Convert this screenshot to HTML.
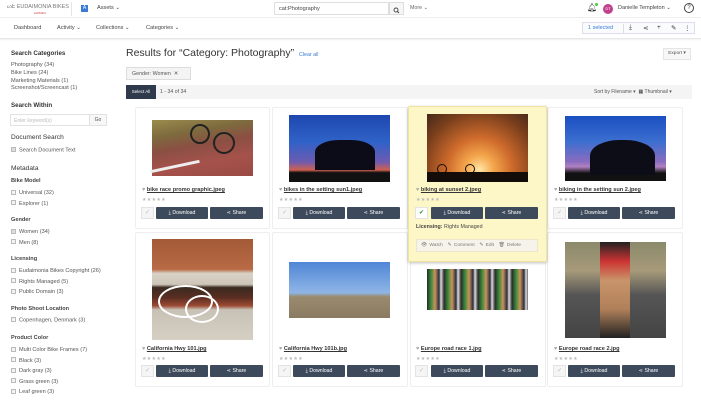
<!DOCTYPE html>
<html><head><meta charset="utf-8"><style>
*{margin:0;padding:0;box-sizing:border-box}
body{width:701px;height:402px;overflow:hidden;background:#fff;font-family:"Liberation Sans",sans-serif;color:#333;position:relative}
.a{position:absolute;white-space:nowrap}
.s{font-size:5.6px;color:#555}
.h{font-size:6.8px;color:#333}
.hb{font-size:5.6px;font-weight:bold;color:#444}
.cb{display:inline-block;width:5px;height:5px;border:0.5px solid #bbb;background:#f3f3f3;margin-right:3px;vertical-align:-0.5px}
.card{position:absolute;background:#fff;border:1px solid #eee;border-radius:2px}
.img{position:absolute}
.t{position:absolute;font-size:5.6px;font-weight:bold;color:#333;white-space:nowrap}
.t u{text-decoration:underline}
.t i{font-style:normal;color:#aaa}
.st{position:absolute;font-size:5px;color:#bbb;letter-spacing:0.3px}
.chk{position:absolute;width:13px;height:12px;border:1px solid #e3e3e3;background:#f5f5f5;color:#bbb;font-size:6px;text-align:center;line-height:10px}
.btn{position:absolute;height:12px;background:#3d4a5c;color:#fff;font-size:5.2px;text-align:center;line-height:12px;border-radius:1px}
.ti{position:absolute;top:24px;font-size:6.5px;color:#333}
</style></head><body>
<div class="a" style="left:0;top:0;width:701px;height:18px;border-bottom:1px solid #eee"></div>
<div class="a" style="left:7px;top:4px;font-size:5.5px;color:#777">ᔕᖶ EUDAIMONIA BIKES</div>
<div class="a" style="left:34px;top:11px;font-size:3px;color:#c44">●WIDEN</div>
<div class="a" style="left:71px;top:2px;width:1px;height:14px;background:#e5e5e5"></div>
<div class="a" style="left:81px;top:5px;width:7px;height:7px;background:#3b7bd4;color:#fff;font-size:5px;text-align:center;line-height:7px">A</div>
<div class="a" style="left:97px;top:5px;font-size:5.6px;color:#444">Assets ⌄</div>
<div class="a" style="left:274px;top:2px;width:115px;height:13px;border:1px solid #ddd;border-radius:1px;font-size:5.6px;color:#444;padding:3px 4px">cat:Photography</div>
<div class="a" style="left:389px;top:2px;width:15px;height:13px;border:1px solid #ddd;background:#f7f7f7"><svg width="13" height="11" viewBox="0 0 13 11"><circle cx="6" cy="5" r="2" fill="none" stroke="#444" stroke-width="0.9"/><path d="M7.4 6.4L9 8" stroke="#444" stroke-width="1"/></svg></div>
<div class="a" style="left:410px;top:5px;font-size:5.3px;color:#666">More ⌄</div>
<div class="a" style="left:587px;top:3px;font-size:8px;color:#333">🔔︎</div>
<div class="a" style="left:595px;top:3px;width:3px;height:3px;border-radius:50%;background:#4c4"></div>
<div class="a" style="left:603px;top:4px;width:10px;height:10px;border-radius:50%;background:#c0408e;color:#fff;font-size:4px;text-align:center;line-height:10px">DT</div>
<div class="a" style="left:618px;top:5px;font-size:5.5px;color:#444">Danielle Templeton ⌄</div>
<div class="a" style="left:684px;top:3px;width:10px;height:10px;border:1px solid #444;border-radius:50%;font-size:6px;text-align:center;line-height:8px">?</div>
<div class="a" style="left:0;top:18px;width:701px;height:21px;border-bottom:1px solid #e8e8e8;box-shadow:0 1px 1px #f0f0f0"></div>
<div class="a" style="left:14px;top:25px;font-size:5.6px;color:#444">Dashboard</div>
<div class="a" style="left:57px;top:25px;font-size:5.6px;color:#444">Activity ⌄</div>
<div class="a" style="left:96px;top:25px;font-size:5.6px;color:#444">Collections ⌄</div>
<div class="a" style="left:146px;top:25px;font-size:5.6px;color:#444">Categories ⌄</div>
<div class="a" style="left:582px;top:22px;width:113px;height:12px;border:1px solid #dde;background:#fafbfd"></div>
<div class="a" style="left:588px;top:25px;font-size:5.5px;color:#3b7bd4">1 selected</div>
<div class="a" style="left:623px;top:24px;width:1px;height:9px;background:#ddd"></div>
<div class="ti" style="left:629px">⤓</div><div class="ti" style="left:643px">⋖</div><div class="ti" style="left:657px">+</div><div class="ti" style="left:671px">✎</div><div class="ti" style="left:684px">⋮</div>
<div class="a h" style="left:11px;top:50px;font-weight:bold;font-size:6.2px">Search Categories</div>
<div class="a s" style="left:11px;top:62px;line-height:7.8px">Photography (34)<br>Bike Lines (24)<br>Marketing Materials (1)<br>Screenshot/Screencast (1)</div>
<div class="a h" style="left:11px;top:102px;font-weight:bold;font-size:6.2px">Search Within</div>
<div class="a" style="left:10px;top:114px;width:97px;height:12px;border:1px solid #e2e2e2;font-size:5px;color:#bbb;padding:3px 3px">Enter keyword(s)</div>
<div class="a" style="left:89px;top:115px;width:17px;height:10px;border-left:1px solid #e2e2e2;background:#f7f7f7;font-size:5px;color:#555;text-align:center;line-height:10px">Go</div>
<div class="a h" style="left:11px;top:134px;font-size:6.6px">Document Search</div>
<div class="a s" style="left:11px;top:147px"><span class="cb" style="background:#ddd"></span>Search Document Text</div>
<div class="a h" style="left:11px;top:165px;font-size:6.6px">Metadata</div>
<div class="a hb" style="left:11px;top:178px">Bike Model</div>
<div class="a s" style="left:11px;top:188px;line-height:10.5px"><span class="cb"></span>Universal (32)<br><span class="cb"></span>Explorer (1)</div>
<div class="a hb" style="left:11px;top:217px">Gender</div>
<div class="a s" style="left:11px;top:227px;line-height:10.5px"><span class="cb" style="background:#ddd"></span>Women (34)<br><span class="cb"></span>Men (8)</div>
<div class="a hb" style="left:11px;top:256px">Licensing</div>
<div class="a s" style="left:11px;top:266px;line-height:10.5px"><span class="cb"></span>Eudaimonia Bikes Copyright (26)<br><span class="cb"></span>Rights Managed (5)<br><span class="cb"></span>Public Domain (3)</div>
<div class="a hb" style="left:11px;top:306px">Photo Shoot Location</div>
<div class="a s" style="left:11px;top:317px"><span class="cb"></span>Copenhagen, Denmark (3)</div>
<div class="a hb" style="left:11px;top:335px">Product Color</div>
<div class="a s" style="left:11px;top:345px;line-height:10.5px"><span class="cb"></span>Multi Color Bike Frames (7)<br><span class="cb"></span>Black (3)<br><span class="cb"></span>Dark gray (3)<br><span class="cb"></span>Grass green (3)<br><span class="cb"></span>Leaf green (3)</div>
<div class="a" style="left:126px;top:47px;font-size:10.5px;color:#333">Results for “Category: Photography”</div>
<div class="a" style="left:299px;top:52px;font-size:5.3px;color:#3b7bd4">Clear all</div>
<div class="a" style="left:663px;top:48px;width:28px;height:12px;border:1px solid #e5e5e5;background:#f7f7f7;font-size:4.8px;color:#555;text-align:center;line-height:10px">Export ▾</div>
<div class="a" style="left:126px;top:67px;width:65px;height:13px;border:1px solid #ddd;background:#f4f4f4;font-size:5.3px;color:#555;padding:3px 5px">Gender: Women &nbsp;✕</div>
<div class="a" style="left:126px;top:85px;width:566px;height:14px;background:#f4f4f4;border-radius:1px"></div>
<div class="a" style="left:126px;top:85px;width:30px;height:14px;background:#2f3b4d;color:#fff;font-size:4.5px;text-align:center;line-height:14px">Select All</div>
<div class="a" style="left:160px;top:89px;font-size:5.2px;color:#555">1 - 34 of 34</div>
<div class="a" style="left:594px;top:89px;font-size:5px;color:#555">Sort by Filename ▾ &nbsp;<span style="color:#333">▦</span> Thumbnail ▾</div>

<div class="card" style="left:135px;top:107px;width:135px;height:122px"></div>
<div class="card" style="left:272px;top:107px;width:136px;height:122px"></div>
<div class="card" style="left:547px;top:107px;width:136px;height:122px"></div>
<div class="card" style="left:135px;top:232px;width:135px;height:155px"></div>
<div class="card" style="left:272px;top:232px;width:136px;height:155px"></div>
<div class="card" style="left:410px;top:232px;width:136px;height:155px"></div>
<div class="card" style="left:547px;top:232px;width:136px;height:155px"></div>
<div class="card" style="left:408px;top:106px;width:139px;height:156px;background:#fdf7c8;border:1px solid #efe3a0;box-shadow:0 1px 3px rgba(0,0,0,.25);z-index:2"></div>

<div class="img" style="left:152px;top:120px;width:101px;height:56px;background:linear-gradient(170deg,#9a8c4c 0%,#7d6a3e 25%,#8b4f43 45%,#a5524b 70%,#9a4a44 100%)"></div>
<div class="img" style="left:190px;top:124px;width:20px;height:20px;border:2px solid #222;border-radius:50%"></div>
<div class="img" style="left:213px;top:132px;width:22px;height:22px;border:2px solid #222;border-radius:50%"></div>
<div class="img" style="left:150px;top:165px;width:50px;height:3px;background:#eee;transform:rotate(-12deg)"></div>
<div class="img" style="left:289px;top:115px;width:101px;height:67px;background:linear-gradient(180deg,#1d47b0 0%,#2f62c8 40%,#6d5bb0 70%,#d06050 82%,#111 86%,#111 100%)"></div>
<div class="img" style="left:315px;top:140px;width:60px;height:30px;background:#0c0c18;border-radius:40% 40% 0 0"></div>
<div class="img" style="left:565px;top:116px;width:101px;height:65px;background:linear-gradient(180deg,#1a4fc0 0%,#3d6fd0 40%,#8a6cc0 70%,#b080c0 78%,#111 88%)"></div>
<div class="img" style="left:590px;top:140px;width:65px;height:35px;background:#0d0d18;border-radius:45% 45% 0 0"></div>

<div class="img" style="left:152px;top:239px;width:101px;height:101px;background:linear-gradient(180deg,#a35a37 0%,#b86a45 30%,#d8d2c6 34%,#cdc6b8 45%,#3a2a20 48%,#5a2e22 58%,#9c4a33 66%,#c8c2b6 70%,#d6d0c4 100%)"></div>
<div class="img" style="left:158px;top:285px;width:55px;height:33px;border:2px solid #fff;border-radius:50%"></div>
<div class="img" style="left:185px;top:295px;width:34px;height:28px;border:2px solid #fff;border-radius:50%"></div>
<div class="img" style="left:289px;top:262px;width:101px;height:56px;background:linear-gradient(180deg,#4f86d6 0%,#8fb5e6 55%,#9a8b6f 62%,#8a7a62 100%)"></div>
<div class="img" style="left:427px;top:269px;width:101px;height:41px;background:repeating-linear-gradient(90deg,#2a2a2a 0,#3a8a3a 4px,#c9935d 8px,#2d2d3d 12px,#ddd 14px,#333 17px)"></div>
<div class="img" style="left:565px;top:242px;width:101px;height:96px;background:linear-gradient(180deg,#8b8a6b 0%,#a79a7a 30%,#555 55%,#444 100%)"></div>
<div class="img" style="left:600px;top:242px;width:30px;height:96px;background:linear-gradient(180deg,#222 0%,#c33 20%,#c9946a 40%,#b0805a 70%,#222 100%)"></div>

<div class="t" style="left:142px;top:187px"><i>♥ </i><u>bike race promo graphic.jpeg</u></div>
<div class="st" style="left:142px;top:197px">★★★★★</div>
<div class="chk" style="left:141px;top:207px">✓</div><div class="btn" style="left:156px;top:207px;width:52px">⤓ Download</div><div class="btn" style="left:210px;top:207px;width:53px">⋖ Share</div>

<div class="t" style="left:279px;top:187px"><i>♥ </i><u>bikes in the setting sun1.jpeg</u></div>
<div class="st" style="left:279px;top:197px">★★★★★</div>
<div class="chk" style="left:278px;top:207px">✓</div><div class="btn" style="left:293px;top:207px;width:52px">⤓ Download</div><div class="btn" style="left:347px;top:207px;width:53px">⋖ Share</div>

<div style="position:absolute;z-index:3;left:0;top:0">
<div class="img" style="left:427px;top:114px;width:101px;height:68px;background:radial-gradient(circle at 52% 82%,#ffe6a8 0%,#f5a84e 18%,#cf6b2c 42%,#7a3f1c 75%,#43291a 100%)"></div>
<div class="img" style="left:427px;top:172px;width:101px;height:10px;background:#140c08"></div>
<div class="img" style="left:437px;top:164px;width:10px;height:10px;border:1.5px solid #140c08;border-radius:50%"></div>
<div class="img" style="left:465px;top:164px;width:10px;height:10px;border:1.5px solid #140c08;border-radius:50%"></div>
<div class="t" style="left:416px;top:187px"><i>♥ </i><u>biking at sunset 2.jpeg</u></div>
<div class="st" style="left:416px;top:197px">★★★★★</div>
<div class="chk" style="left:415px;top:207px;background:#fff;color:#2a9a2a">✔</div><div class="btn" style="left:431px;top:207px;width:52px">⤓ Download</div><div class="btn" style="left:485px;top:207px;width:53px">⋖ Share</div>
<div class="a" style="left:416px;top:224px;font-size:5.3px;color:#444"><b>Licensing:</b> Rights Managed</div>
<div class="a" style="left:416px;top:239px;width:122px;height:13px;background:#f6f4ea;border:1px solid #ebe6cc;font-size:4.8px;color:#777;padding:3px 4px;word-spacing:1px">👁 Watch &nbsp;✎ Comment &nbsp;✎ Edit &nbsp;🗑 Delete</div>
</div>

<div class="t" style="left:554px;top:187px"><i>♥ </i><u>biking in the setting sun 2.jpeg</u></div>
<div class="st" style="left:554px;top:197px">★★★★★</div>
<div class="chk" style="left:553px;top:207px">✓</div><div class="btn" style="left:568px;top:207px;width:52px">⤓ Download</div><div class="btn" style="left:622px;top:207px;width:53px">⋖ Share</div>

<div class="t" style="left:142px;top:346px"><i>♥ </i><u>California Hwy 101.jpg</u></div>
<div class="st" style="left:142px;top:356px">★★★★★</div>
<div class="chk" style="left:141px;top:365px">✓</div><div class="btn" style="left:156px;top:365px;width:52px">⤓ Download</div><div class="btn" style="left:210px;top:365px;width:53px">⋖ Share</div>

<div class="t" style="left:279px;top:346px"><i>♥ </i><u>California Hwy 101b.jpg</u></div>
<div class="st" style="left:279px;top:356px">★★★★★</div>
<div class="chk" style="left:278px;top:365px">✓</div><div class="btn" style="left:293px;top:365px;width:52px">⤓ Download</div><div class="btn" style="left:347px;top:365px;width:53px">⋖ Share</div>

<div class="t" style="left:416px;top:346px"><i>♥ </i><u>Europe road race 1.jpg</u></div>
<div class="st" style="left:416px;top:356px">★★★★★</div>
<div class="chk" style="left:415px;top:365px">✓</div><div class="btn" style="left:431px;top:365px;width:52px">⤓ Download</div><div class="btn" style="left:485px;top:365px;width:53px">⋖ Share</div>

<div class="t" style="left:554px;top:346px"><i>♥ </i><u>Europe road race 2.jpg</u></div>
<div class="st" style="left:554px;top:356px">★★★★★</div>
<div class="chk" style="left:553px;top:365px">✓</div><div class="btn" style="left:568px;top:365px;width:52px">⤓ Download</div><div class="btn" style="left:622px;top:365px;width:53px">⋖ Share</div>
</body></html>
